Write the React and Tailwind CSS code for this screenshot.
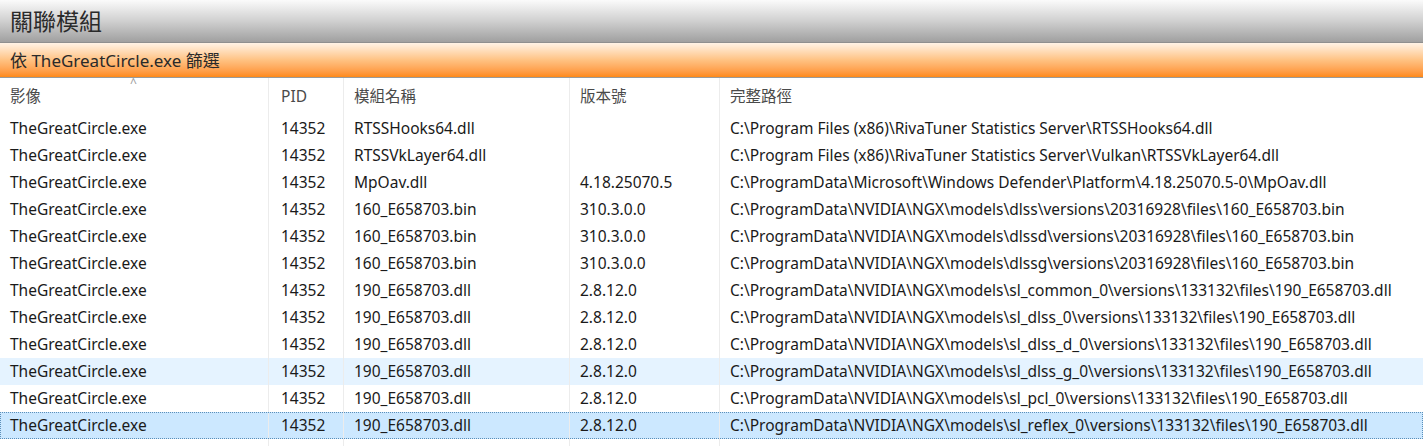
export default function App() {
  const rows = [
    ["RTSSHooks64.dll", "", "C:\\Program Files (x86)\\RivaTuner Statistics Server\\RTSSHooks64.dll"],
    ["RTSSVkLayer64.dll", "", "C:\\Program Files (x86)\\RivaTuner Statistics Server\\Vulkan\\RTSSVkLayer64.dll"],
    ["MpOav.dll", "4.18.25070.5", "C:\\ProgramData\\Microsoft\\Windows Defender\\Platform\\4.18.25070.5-0\\MpOav.dll"],
    ["160_E658703.bin", "310.3.0.0", "C:\\ProgramData\\NVIDIA\\NGX\\models\\dlss\\versions\\20316928\\files\\160_E658703.bin"],
    ["160_E658703.bin", "310.3.0.0", "C:\\ProgramData\\NVIDIA\\NGX\\models\\dlssd\\versions\\20316928\\files\\160_E658703.bin"],
    ["160_E658703.bin", "310.3.0.0", "C:\\ProgramData\\NVIDIA\\NGX\\models\\dlssg\\versions\\20316928\\files\\160_E658703.bin"],
    ["190_E658703.dll", "2.8.12.0", "C:\\ProgramData\\NVIDIA\\NGX\\models\\sl_common_0\\versions\\133132\\files\\190_E658703.dll"],
    ["190_E658703.dll", "2.8.12.0", "C:\\ProgramData\\NVIDIA\\NGX\\models\\sl_dlss_0\\versions\\133132\\files\\190_E658703.dll"],
    ["190_E658703.dll", "2.8.12.0", "C:\\ProgramData\\NVIDIA\\NGX\\models\\sl_dlss_d_0\\versions\\133132\\files\\190_E658703.dll"],
    ["190_E658703.dll", "2.8.12.0", "C:\\ProgramData\\NVIDIA\\NGX\\models\\sl_dlss_g_0\\versions\\133132\\files\\190_E658703.dll"],
    ["190_E658703.dll", "2.8.12.0", "C:\\ProgramData\\NVIDIA\\NGX\\models\\sl_pcl_0\\versions\\133132\\files\\190_E658703.dll"],
    ["190_E658703.dll", "2.8.12.0", "C:\\ProgramData\\NVIDIA\\NGX\\models\\sl_reflex_0\\versions\\133132\\files\\190_E658703.dll"],
    ["nvngx_dlssg.dll", "3.8.10.0", "C:\\Program Files\\NVIDIA Corporation\\nvngx_dlssg.dll"],
  ]

  const font = { fontFamily: '"Noto Sans", "Noto Sans CJK TC", sans-serif' }

  return (
    <div className="w-[1423px] h-[446px] overflow-hidden bg-white text-[#1a1a1a]" style={font}>
      {/* title bar */}
      <div className="h-[43px] flex items-center pl-[10px] bg-gradient-to-b from-[#fbfbfb] via-[#d0d0d0] to-[#a0a0a0] border-b border-[#8f8f8f]">
        <span className="text-[23px] text-[#2a2a2a] leading-none">關聯模組</span>
      </div>

      {/* filter bar */}
      <div className="h-[35px] flex items-center pl-[10px] bg-gradient-to-b from-[#fff3e6] via-[#ffc282] to-[#ff8a14] border-b border-[#9a9a9a]">
        <span className="text-[17px] text-[#2a2a2a] leading-none">依 TheGreatCircle.exe 篩選</span>
      </div>

      {/* header */}
      <div className="relative h-[37px] flex items-center text-[15.5px] text-[#4a4a4a]">
        <span className="absolute left-[130px] top-[-4px] text-[12px] text-[#9a9a9a]">^</span>
        <div className="w-[269px] pl-[10px] h-full flex items-center border-r border-[#ececec]">影像</div>
        <div className="w-[75px] pl-[12px] h-full flex items-center border-r border-[#ececec]">PID</div>
        <div className="w-[226px] pl-[10px] h-full flex items-center border-r border-[#ececec]">模組名稱</div>
        <div className="w-[150px] pl-[10px] h-full flex items-center border-r border-[#ececec]">版本號</div>
        <div className="flex-1 pl-[10px] h-full flex items-center">完整路徑</div>
      </div>

      {rows.map((r, i) => {
        const hover = i === 9
        const sel = i === 11
        return (
          <div
            key={i}
            className={
              "h-[27px] flex items-center text-[15.5px] whitespace-nowrap " +
              (sel
                ? "bg-[#cce8ff] outline outline-1 outline-dotted outline-[#5b8fb9] -outline-offset-1"
                : hover
                ? "bg-[#e5f3ff]"
                : "")
            }
          >
            <div className="w-[269px] pl-[10px] h-full flex items-center border-r border-[#ececec]">TheGreatCircle.exe</div>
            <div className="w-[75px] pl-[12px] h-full flex items-center border-r border-[#ececec]">14352</div>
            <div className="w-[226px] pl-[10px] h-full flex items-center border-r border-[#ececec]">{r[0]}</div>
            <div className="w-[150px] pl-[10px] h-full flex items-center border-r border-[#ececec]">{r[1]}</div>
            <div className="flex-1 pl-[10px] h-full flex items-center">{r[2]}</div>
          </div>
        )
      })}
    </div>
  )
}
